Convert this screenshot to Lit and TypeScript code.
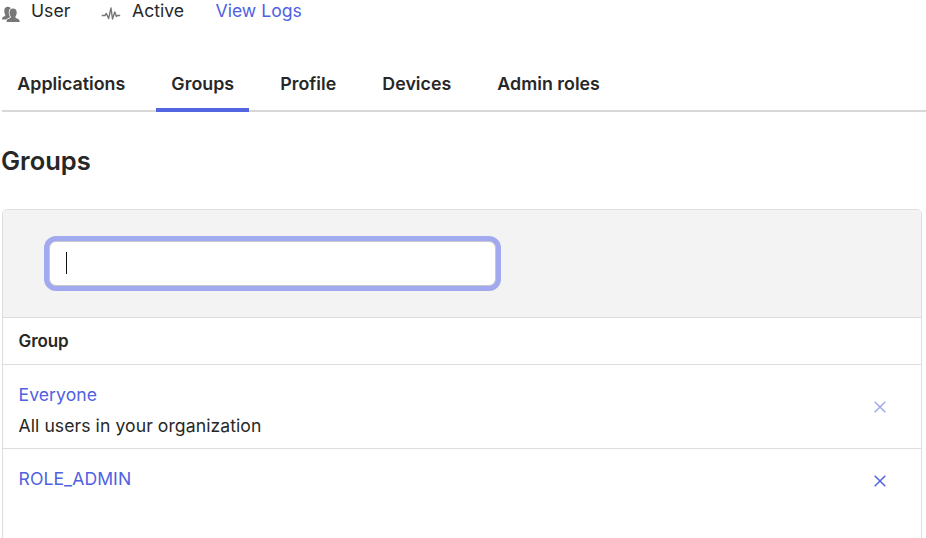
import { LitElement, html, css, svg } from "lit";
import { customElement, property, state } from "lit/decorators.js";
import { classMap } from "lit/directives/class-map.js";

interface Group {
  name: string;
  description?: string;
  locked?: boolean;
}

@customElement("status-bar")
class StatusBar extends LitElement {
  static styles = css`
    :host {
      display: flex;
      height: 22px;
      line-height: 22px;
      font-size: 17.6px;
      color: #272727;
      white-space: nowrap;
    }
    svg { display: block; flex: none; fill: #777; }
    .people { width: 20px; height: 22px; margin-right: 11px; }
    .front { stroke: #fff; stroke-width: 1.6; paint-order: stroke; }
    .pulse { width: 20px; height: 22px; margin: 0 11px 0 30px; fill: none; stroke: #777; stroke-width: 1.4; stroke-linejoin: round; }
    .logs { color: #5061e2; margin-left: 30.5px; }
    .user { width: 40px; }
    .active { width: 53px; }
  `;
  render() {
    return html`
      <svg class="people" viewBox="0 0 20 22">
        ${svg`<path d="M2 19.600c0-2 .6-2.700 2.500-3.400.8-.4.9-.9.600-1.700C4.500 13.500 4.200 12 4.300 10.300 4.500 8 5.600 6.700 7.800 6.700c2 0 3.200 1 3.500 3v6.300L7 19.600z"/>
        <path class="front" d="M6.500 22c0-2 .7-2.800 2.900-3.500 1.300-.5 1.600-1 1.400-1.900-.9-1-1.300-2.500-1.300-4.200 0-2.400 1.400-3.800 3.600-3.800s3.600 1.400 3.600 3.800c0 1.700-.4 3.200-1.300 4.200-.2.900.1 1.400 1.400 1.900 2.200.7 2.900 1.500 2.900 3.500z"/>`}
      </svg>
      <span class="user">User</span>
      <svg class="pulse" viewBox="0 0 20 22">
        <path d="M.7 15.500h3.300l1.300-2 2.300 5L10 8l1.500 11 2.300-7 1.600 4.500 1-1h2.800" />
      </svg>
      <span class="active">Active</span>
      <span class="logs">View Logs</span>
    `;
  }
}

@customElement("tab-strip")
class TabStrip extends LitElement {
  @property({ type: Array }) tabs: string[] = [];
  @property() selected = "";
  static styles = css`
    :host {
      display: flex;
      gap: 15.5px;
      height: 52px;
      margin: 38px 0 0 2px;
      box-sizing: border-box;
      border-bottom: 2px solid #d8d8d8;
      white-space: nowrap;
    }
    .tab {
      height: 52px;
      box-sizing: border-box;
      padding: 0 15.300px;
      line-height: 47px;
      font-size: 17.800px;
      font-weight: 600;
      letter-spacing: 0.030px;
      color: #272727;
    }
    .selected { border-bottom: 4px solid #5465e2; }
  `;
  render() {
    return this.tabs.map(
      (t) => html`<div class=${classMap({ tab: true, selected: t === this.selected })}>${t}</div>`
    );
  }
}

@customElement("group-table")
class GroupTable extends LitElement {
  @property({ type: Array }) groups: Group[] = [];
  static styles = css`
    :host {
      display: block;
      width: 918px;
      height: 360px;
      margin: 32px 0 0 2px;
      border: 1px solid #dedede;
      border-radius: 5px 5px 0 0;
      overflow: hidden;
      white-space: nowrap;
    }
    .search {
      height: 108px;
      box-sizing: border-box;
      padding: 31px 0 0 46px;
      background: #f3f3f3;
      border-bottom: 1px solid #dedede;
    }
    .field {
      display: flex;
      align-items: center;
      width: 447px;
      height: 45px;
      box-sizing: border-box;
      padding: 0 0 2px 16px;
      background: #fff;
      border: 1px solid #c8c8cc;
      border-radius: 7px;
      box-shadow: 0 0 0 5px #a1a9ef;
    }
    .caret { width: 1px; height: 22px; background: #111; }
    .head {
      height: 47px;
      box-sizing: border-box;
      padding-left: 15.500px;
      border-bottom: 1px solid #dedede;
      font-size: 17px;
      font-weight: 600;
      line-height: 47px;
      letter-spacing: -0.1px;
      color: #272727;
    }
    .row {
      display: flex;
      justify-content: space-between;
      align-items: center;
      height: 84px;
      box-sizing: border-box;
      padding: 0 35.500px 0 15.500px;
      border-bottom: 1px solid #dedede;
      font-size: 17.6px;
      line-height: 31px;
      letter-spacing: 0.070px;
      color: #272727;
    }
    .text { padding-top: 6px; }
    .single { align-items: flex-start; height: 100px; }
    .single .text { padding-top: 14px; }
    .single .remove { margin-top: 26px; }
    .name { color: #5061e2; }
    .remove { width: 12px; height: 12px; stroke: #5061e2; stroke-width: 1.500; fill: none; }
    .locked { opacity: 0.55; }
  `;
  render() {
    return html`
      <div class="search"><div class="field"><span class="caret"></span></div></div>
      <div class="head">Group</div>
      ${this.groups.map(
        (g) => html`
          <div class=${classMap({ row: true, single: !g.description })}>
            <div class="text">
              <div class="name">${g.name}</div>
              ${g.description ? html`<div>${g.description}</div>` : null}
            </div>
            <svg class=${classMap({ remove: true, locked: !!g.locked })} viewBox="0 0 12 12">
              <path d="M.7.7l10.600 10.600M11.300.7L.7 11.300" />
            </svg>
          </div>
        `
      )}
    `;
  }
}

@customElement("app-root")
class AppRoot extends LitElement {
  @state() private groups: Group[] = [
    { name: "Everyone", description: "All users in your organization", locked: true },
    { name: "ROLE_ADMIN" },
  ];
  static styles = css`
    :host {
      display: block;
      height: 538px;
      overflow: hidden;
      background: #fff;
      font-family: Inter, "Liberation Sans", sans-serif;
    }
    .title {
      margin: 33px 0 0 1px;
      height: 32px;
      line-height: 32px;
      font-size: 25.500px;
      font-weight: 600;
      letter-spacing: 0;
      color: #272727;
    }
  `;
  render() {
    return html`
      <status-bar></status-bar>
      <tab-strip
        .tabs=${["Applications", "Groups", "Profile", "Devices", "Admin roles"]}
        selected="Groups"
      ></tab-strip>
      <h2 class="title">Groups</h2>
      <group-table .groups=${this.groups}></group-table>
    `;
  }
}
